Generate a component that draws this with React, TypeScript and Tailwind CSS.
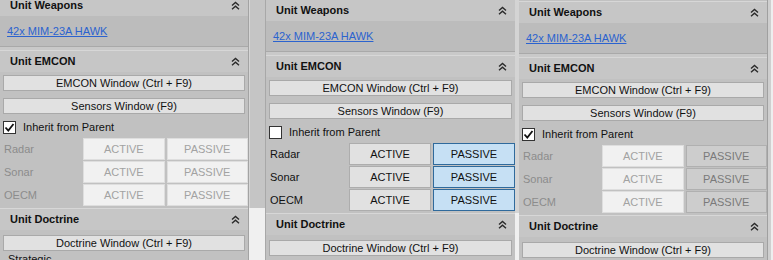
import React from 'react';

type Variant = 'disabled' | 'passive' | 'disabledPassive';

interface PanelProps {
  offset: string;
  checked: boolean;
  variant: Variant;
  className?: string;
}

const Chevrons: React.FC = () => (
  <svg width="9" height="9" viewBox="0 0 9 9" fill="none" stroke="#2a2a2a" strokeWidth="1.4">
    <path d="M1 4.5L4.5 1.5L8 4.5" />
    <path d="M1 8.2L4.5 5.2L8 8.2" />
  </svg>
);

const Header: React.FC<{ title: string }> = ({ title }) => (
  <div className="flex h-[22px] items-center justify-between border-t border-[#d7d7d7] bg-[#c6c6c6] pl-[10px] pr-[8px] font-bold text-[#111]">
    <span>{title}</span>
    <Chevrons />
  </div>
);

const WinButton: React.FC<{ label: string }> = ({ label }) => (
  <div className="mx-[3px] flex h-[16px] items-center justify-center border border-[#a9a9a9] bg-[#e1e1e1] text-[#111]">
    {label}
  </div>
);

const SensorRow: React.FC<{ name: string; variant: Variant }> = ({ name, variant }) => {
  const labelCls = variant === 'passive' ? 'text-[#111]' : 'text-[#8c8c8c]';
  const activeCls =
    variant === 'passive'
      ? 'border-[#adadad] bg-[#e1e1e1] text-[#111]'
      : 'border-[#dedede] bg-[#f1f1f1] text-[#a2a2a2]';
  const passiveCls =
    variant === 'passive'
      ? 'border-[#2f6a9c] bg-[#c6e0f4] text-[#111]'
      : variant === 'disabledPassive'
        ? 'border-[#b0b0b0] bg-[#cdcdcd] text-[#7a7a7a]'
        : 'border-[#dedede] bg-[#f1f1f1] text-[#a2a2a2]';

  return (
    <div className="flex h-[22px] items-stretch">
      <div className={`flex w-[83px] items-center pl-[4px] ${labelCls}`}>{name}</div>
      <div className={`flex flex-1 items-center justify-center border ${activeCls}`}>ACTIVE</div>
      <div className="w-[2px]" />
      <div className={`flex flex-1 items-center justify-center border ${passiveCls}`}>PASSIVE</div>
    </div>
  );
};

const Panel: React.FC<PanelProps> = ({ offset, checked, variant, className }) => (
  <div className={`h-[260px] w-[249px] shrink-0 overflow-hidden bg-[#c1c1c1] ${className ?? ''}`}>
    <div className={offset}>
      <Header title="Unit Weapons" />
      <div className="flex h-[31px] items-center border-b border-[#a9a9a9] bg-[#bcbcbc] pl-[7px]">
        <span className="text-[#2b63cf] underline">42x MIM-23A HAWK</span>
      </div>
      <div className="h-[3px] bg-[#c9c9c9]" />

      <Header title="Unit EMCON" />
      <div className="flex flex-col pt-[3px] pb-[2px]">
        <WinButton label="EMCON Window (Ctrl + F9)" />
        <div className="h-[7px]" />
        <WinButton label="Sensors Window (F9)" />
        <div className="mt-[3px] flex h-[20px] items-center gap-[7px] pl-[3px]">
          <div className="flex h-[13px] w-[13px] items-center justify-center border border-[#333] bg-white">
            {checked && (
              <svg width="11" height="11" viewBox="0 0 11 11" fill="none" stroke="#111" strokeWidth="1.8">
                <path d="M1.5 5.5L4.3 8.5L9.5 2" />
              </svg>
            )}
          </div>
          <span className="text-[#111]">Inherit from Parent</span>
        </div>
        <div className="mt-[1px] flex flex-col gap-px">
          <SensorRow name="Radar" variant={variant} />
          <SensorRow name="Sonar" variant={variant} />
          <SensorRow name="OECM" variant={variant} />
        </div>
      </div>

      <Header title="Unit Doctrine" />
      <div className="flex flex-col pt-[5px]">
        <WinButton label="Doctrine Window (Ctrl + F9)" />
        <div className="mt-[3px] pl-[8px] text-[#111]">Strategic</div>
      </div>
    </div>
  </div>
);

const App: React.FC = () => {
  return (
    <div
      className="flex h-[260px] w-[773px] overflow-hidden bg-[#eeeeee] text-[11px] leading-none"
      style={{ fontFamily: '"Liberation Sans", Arial, sans-serif' }}
    >
      <Panel offset="mt-[-6px]" checked variant="disabled" className="border-r border-[#a3a3a3]" />

      <div className="flex w-[16px] shrink-0 flex-col">
        <div className="h-[208px] border-l border-[#d6d6d6] bg-[#c5c5c5]" />
        <div className="flex-1 bg-[#f0f0f0]" />
      </div>

      <div className="border-l border-[#a8a8a8]">
        <Panel offset="mt-[-1px]" checked={false} variant="passive" />
      </div>

      <div className="flex w-[4px] shrink-0 flex-col">
        <div className="h-[213px] bg-[#d4d4d4]" />
        <div className="flex-1 bg-[#f0f0f0]" />
      </div>

      <Panel offset="mt-[1px]" checked variant="disabledPassive" className="border-r border-[#a0a0a0]" />
      <div className="w-[3px] shrink-0 bg-[#cfcfcf]" />
    </div>
  );
};

export default App;
